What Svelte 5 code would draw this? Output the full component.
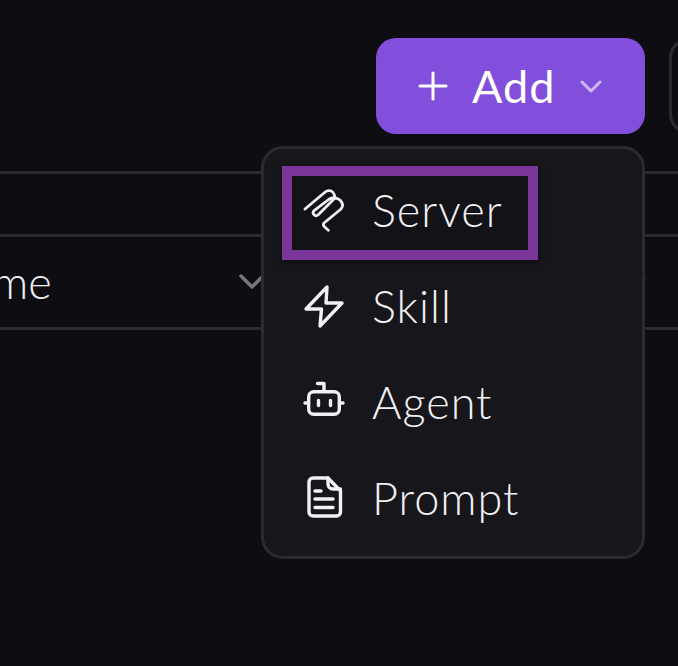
<script>
  const items = [
    { label: 'Server', key: 'server' },
    { label: 'Skill', key: 'skill' },
    { label: 'Agent', key: 'agent' },
    { label: 'Prompt', key: 'prompt' }
  ];
</script>

<div class="page">
  <header class="toolbar">
    <div class="add-wrap">
      <button class="add">
        <svg class="plus" viewBox="0 0 30 30" width="30" height="30" fill="none" stroke="#fff" stroke-width="3" stroke-linecap="round"><path d="M15 2v26M2 15h26"/></svg>
        <span>Add</span>
        <svg class="caret" viewBox="0 0 22 14" width="22" height="14" fill="none" stroke="#cdb8f0" stroke-width="3" stroke-linecap="round" stroke-linejoin="round"><path d="M2 3l9 9 9-9"/></svg>
      </button>
      <div class="menu">
        {#each items as item, i}
          <div class="item" class:focused={i === 0}>
            <svg class="icon" viewBox="0 0 44 44" width="44" height="44" fill="none" stroke="#f1f0f3" stroke-width="3.4" stroke-linecap="round" stroke-linejoin="round">
              {#if item.key === 'server'}
                <path stroke-width="2.800" d="M3 21 22 5C25 2 29 2 31 4.500 33 7 33 10 31 12L16 27a3 3 0 0 1-4.200-4.200L26 12C29 9 34 9 38 12 41 15 41.500 18 39 21L22 35a2.200 2.200 0 0 0 0 3.200l4.300 4.100"/>
              {:else if item.key === 'skill'}
                <path d="M25 3 4 25h15.500L18 42l22-23H24z"/>
              {:else if item.key === 'agent'}
                <rect x="6.700" y="11.700" width="30.600" height="22.600" rx="5"/>
                <path d="M22 11V3.500h-6.500M3 23h2M39 23h2M16.500 20.500v5M28.500 20.500v5"/>
              {:else}
                <path d="M11 2h15l12.500 13v21a4 4 0 0 1-4 4H11a4 4 0 0 1-4-4V6a4 4 0 0 1 4-4z"/>
                <path d="M26 2v6a5 5 0 0 0 5 5h7.500M13 15h6M13 23h18M13 31.500h18"/>
              {/if}
            </svg>
            <span>{item.label}</span>
          </div>
        {/each}
      </div>
    </div>
    <div class="next"></div>
  </header>

  <section class="table">
    <div class="head"></div>
    <div class="row">
      <div class="cell name"><span>Name</span>
        <svg viewBox="0 0 26 18" width="26" height="18" fill="none" stroke="#77767b" stroke-width="3.500" stroke-linecap="round" stroke-linejoin="round"><path d="M2 3l11 11L24 3"/></svg>
      </div>
      <div class="cell tag">Tag</div>
    </div>
  </section>
</div>

<style>
  :global(body) {
    margin: 0;
    background: #0e0e12;
    overflow: hidden;
  }
  .page {
    width: 678px;
    height: 666px;
    overflow: hidden;
    background: #0e0e12;
    font-family: Lato, "Liberation Sans", sans-serif;
    color: #f1f0f3;
  }
  .toolbar {
    display: flex;
    gap: 24px;
    padding: 38px 0 0 376px;
    height: 96px;
    width: 500px;
  }
  .add-wrap {
    position: relative;
    width: 269px;
    flex: none;
  }
  .add {
    width: 269px;
    height: 96px;
    display: flex;
    align-items: center;
    padding: 0 0 0 42px;
    box-sizing: border-box;
    background: #824fdd;
    border: 0;
    border-radius: 20px;
    color: #fff;
    font: 400 45px Lato, "Liberation Sans", sans-serif;
    letter-spacing: 1px;
  }
  .add span {
    margin-left: 24px;
  }
  .caret {
    margin-left: 25px;
  }
  .next {
    flex: none;
    width: 80px;
    height: 96px;
    box-sizing: border-box;
    border: 3px solid #2a2a30;
    border-radius: 20px;
  }
  .menu {
    position: absolute;
    z-index: 2;
    top: 108px;
    right: 0;
    width: 384px;
    height: 413px;
    box-sizing: border-box;
    padding: 13px 0 0 18px;
    background: #17161a;
    border: 3px solid #2a2a30;
    border-radius: 22px;
    display: flex;
    flex-direction: column;
  }
  .item {
    position: relative;
    height: 96px;
    width: 256px;
    box-sizing: border-box;
    display: flex;
    align-items: center;
    gap: 26px;
    padding-left: 20px;
    font-size: 45px;
    font-weight: 300;
    letter-spacing: 1px;
    flex: none;
  }
  .item > * {
    position: relative;
    z-index: 1;
  }
  .item.focused::before {
    content: "";
    position: absolute;
    inset: 4px 0 -2px 0;
    box-sizing: border-box;
    border: 10px solid #7a3799;
    background: #131216;
    box-shadow: 0 2px 6px #0008;
  }
  .table {
    margin-top: 37px;
    margin-left: -63px;
    width: 800px;
    border-top: 3px solid #2a2a30;
  }
  .head {
    height: 60px;
    border-bottom: 3px solid #2a2a30;
  }
  .row {
    height: 90px;
    border-bottom: 3px solid #2a2a30;
    display: flex;
    align-items: center;
    font-size: 45px;
    font-weight: 300;
  }
  .cell.name {
    display: flex;
    align-items: center;
    justify-content: space-between;
    width: 328px;
  }
  .cell.tag {
    margin-left: 316px;
    color: #a09fa5;
  }
</style>
